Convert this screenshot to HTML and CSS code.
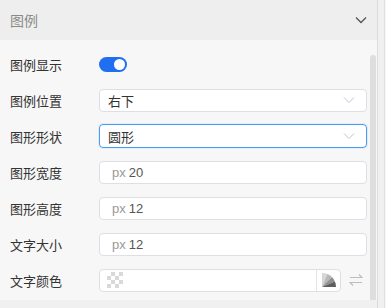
FILE: index.html
```html
<!DOCTYPE html>
<html lang="zh-CN">
<head>
    <meta charset="UTF-8">
    <meta name="viewport" content="width=device-width, initial-scale=1.0">
    <title>图例</title>
    <link rel="stylesheet" href="styles.css">
</head>
<body>
    <div class="panel">
        <div class="main">
            <div class="section-head">
                <span class="section-title">图例</span>
                <svg class="head-arrow" width="12" height="8" viewBox="0 0 12 8"><path d="M1 1.5 L6 6.5 L11 1.5" fill="none" stroke="#555" stroke-width="1.3"/></svg>
            </div>
            <div class="section-body">
                <div class="form">
                    <div class="row">
                        <label>图例显示</label>
                        <div class="switch on"><span class="knob"></span></div>
                    </div>
                    <div class="row">
                        <label>图例位置</label>
                        <div class="select">
                            <span>右下</span>
                            <svg width="12" height="8" viewBox="0 0 12 8"><path d="M1 1.5 L6 6.5 L11 1.5" fill="none" stroke="#c0c4cc" stroke-width="1"/></svg>
                        </div>
                    </div>
                    <div class="row">
                        <label>图形形状</label>
                        <div class="select focus">
                            <span>圆形</span>
                            <svg width="12" height="8" viewBox="0 0 12 8"><path d="M1 1.5 L6 6.5 L11 1.5" fill="none" stroke="#c0c4cc" stroke-width="1"/></svg>
                        </div>
                    </div>
                    <div class="row">
                        <label>图形宽度</label>
                        <div class="input"><span class="unit">px</span> 20</div>
                    </div>
                    <div class="row">
                        <label>图形高度</label>
                        <div class="input"><span class="unit">px</span> 12</div>
                    </div>
                    <div class="row">
                        <label>文字大小</label>
                        <div class="input"><span class="unit">px</span> 12</div>
                    </div>
                    <div class="row">
                        <label>文字颜色</label>
                        <div class="color-box">
                            <div class="color-value"><span class="swatch"></span></div>
                            <div class="color-pick">
                                <svg width="14" height="14" viewBox="0 0 14 14">
                                    <path d="M0 14 L0 0 A14 14 0 0 1 5.4 1.1 Z" fill="#d6d6d6"/>
                                    <path d="M0 14 L5.4 1.1 A14 14 0 0 1 9.9 4.1 Z" fill="#b8b8b8"/>
                                    <path d="M0 14 L9.9 4.1 A14 14 0 0 1 12.9 8.6 Z" fill="#8f8f8f"/>
                                    <path d="M0 14 L12.9 8.6 A14 14 0 0 1 14 14 Z" fill="#5e5e5e"/>
                                </svg>
                            </div>
                        </div>
                        <svg class="swap" width="14" height="14" viewBox="0 0 14 14"><path d="M1 4.5 H13 L10 1.5 M13 9.5 H1 L4 12.5" fill="none" stroke="#bdbdbd" stroke-width="1.2"/></svg>
                    </div>
                </div>
                <div class="scroll-track"><div class="scroll-thumb"></div></div>
            </div>
            <div class="section-foot"></div>
        </div>
        <div class="rail"></div>
    </div>
</body>
</html>
```
FILE: styles.css
```css
body {
    margin: 0;
    font-family: "Liberation Sans", "Noto Sans CJK SC", sans-serif;
    font-size: 13px;
    color: #333;
    background-color: #f7f7f7;
}
.panel {
    display: flex;
    width: 386px;
    height: 308px;
    overflow: hidden;
}
.main {
    width: 377px;
    border-right: 1px solid #dcdcdc;
    display: flex;
    flex-direction: column;
}
.rail {
    width: 6px;
    background-color: #f0f0f0;
    border-right: 1px solid #e0e0e0;
}
.section-head {
    box-sizing: border-box;
    height: 40px;
    flex-shrink: 0;
    background-color: #eeeeee;
    display: flex;
    align-items: center;
    justify-content: space-between;
    padding: 0 10px 0 10px;
}
.section-title {
    font-size: 14px;
    color: #8a8a8a;
}
.head-arrow {
    display: block;
}
.section-body {
    display: flex;
    height: 260px;
    flex-shrink: 0;
}
.form {
    width: 357px;
    padding: 12px 3px 0 10px;
    display: flex;
    flex-direction: column;
    gap: 12px;
}
.row {
    display: flex;
    align-items: center;
    height: 24px;
}
.row label {
    width: 89px;
    flex-shrink: 0;
}
.switch {
    width: 28px;
    height: 15px;
    border-radius: 8px;
    background-color: #1f6ff0;
    display: flex;
    align-items: center;
    justify-content: flex-end;
    padding: 0 2px;
    box-sizing: border-box;
}
.knob {
    width: 11px;
    height: 11px;
    border-radius: 50%;
    background-color: white;
}
.select, .input, .color-box {
    box-sizing: border-box;
    height: 23px;
    border: 1px solid #dcdfe6;
    border-radius: 4px;
    background-color: white;
    display: flex;
    align-items: center;
}
.select, .input {
    width: 268px;
}
.select {
    justify-content: space-between;
    padding: 0 11px 0 8px;
    color: #333;
}
.select.focus {
    height: 24px;
    border-color: #4a9cf5;
    box-shadow: 0 0 0 1px rgba(64, 158, 255, 0.12);
}
.input {
    padding-left: 12px;
    color: #555;
}
.unit {
    color: #999;
    margin-right: 3px;
}
.color-box {
    width: 242px;
    overflow: hidden;
}
.color-value {
    flex: 1;
    height: 100%;
    display: flex;
    align-items: center;
    padding-left: 7px;
    border-right: 1px solid #e4e4e4;
}
.swatch {
    width: 16px;
    height: 16px;
    background-color: #fff;
    background-image:
        linear-gradient(45deg, #d9d9d9 25%, transparent 25%, transparent 75%, #d9d9d9 75%),
        linear-gradient(45deg, #d9d9d9 25%, transparent 25%, transparent 75%, #d9d9d9 75%);
    background-size: 8px 8px;
    background-position: 0 0, 4px 4px;
}
.color-pick {
    width: 23px;
    height: 100%;
    display: flex;
    align-items: center;
    justify-content: center;
}
.swap {
    margin-left: 8px;
}
.scroll-track {
    width: 6px;
    padding-top: 15px;
}
.scroll-thumb {
    width: 6px;
    height: 260px;
    border-radius: 3px 3px 0 0;
    background-color: #dedede;
}
.section-foot {
    flex: 1;
    background-color: #f0f0f0;
}
```
